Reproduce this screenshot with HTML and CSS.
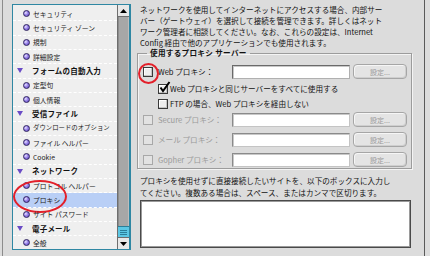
FILE: index.html
```html
<!DOCTYPE html>
<html lang="ja">
<head>
<meta charset="utf-8">
<link rel="stylesheet" href="styles.css">
</head>
<body>
<div class="sidebar">
  <div class="tree">
    <div class="rows">
      <div class="row item"><span class="bullet"></span><span class="txt">セキュリティ</span></div>
      <div class="row item"><span class="bullet"></span><span class="txt">セキュリティ ゾーン</span></div>
      <div class="row item"><span class="bullet"></span><span class="txt">規制</span></div>
      <div class="row item"><span class="bullet"></span><span class="txt">詳細設定</span></div>
      <div class="row cat"><span class="tri"></span><span class="txt">フォームの自動入力</span></div>
      <div class="row item"><span class="bullet"></span><span class="txt">定型句</span></div>
      <div class="row item"><span class="bullet"></span><span class="txt">個人情報</span></div>
      <div class="row cat"><span class="tri"></span><span class="txt">受信ファイル</span></div>
      <div class="row item"><span class="bullet"></span><span class="txt narrow">ダウンロードのオプション</span></div>
      <div class="row item"><span class="bullet"></span><span class="txt">ファイル ヘルパー</span></div>
      <div class="row item"><span class="bullet"></span><span class="txt">Cookie</span></div>
      <div class="row cat"><span class="tri"></span><span class="txt">ネットワーク</span></div>
      <div class="row item"><span class="bullet"></span><span class="txt">プロトコル ヘルパー</span></div>
      <div class="row item sel"><span class="bullet"></span><span class="txt">プロキシ</span><span class="mark-ellipse"></span></div>
      <div class="row item"><span class="bullet"></span><span class="txt">サイト パスワード</span></div>
      <div class="row cat"><span class="tri"></span><span class="txt">電子メール</span></div>
      <div class="row item"><span class="bullet"></span><span class="txt">全般</span></div>
    </div>
    <div class="scrollbar">
      <div class="sb-btn"><svg width="7" height="4" viewBox="0 0 7 4"><path d="M0 4 L3.5 0 L7 4 Z" fill="#000"/></svg></div>
      <div class="sb-track"></div>
      <div class="sb-thumb"><i></i><i></i><i></i></div>
      <div class="sb-btn"><svg width="7" height="4" viewBox="0 0 7 4"><path d="M0 0 L3.5 4 L7 0 Z" fill="#000"/></svg></div>
    </div>
  </div>
</div>
<div class="main">
  <p class="desc">ネットワークを使用してインターネットにアクセスする場合、内部サー<br>バー（ゲートウェイ）を選択して接続を管理できます。詳しくはネット<br>ワーク管理者に相談してください。なお、これらの設定は、Internet<br>Config 経由で他のアプリケーションでも使用されます。</p>
  <fieldset class="group">
    <legend>使用するプロキシ サーバー</legend>
    <div class="prow">
      <span class="cb circled"><span class="mark-circle"></span></span>
      <span class="plabel">Web プロキシ：</span>
      <span class="field"></span>
      <span class="btn">設定...</span>
    </div>
    <div class="srow first">
      <span class="cb checked"><svg width="13" height="13" viewBox="0 0 13 13"><path d="M2.5 6.5 L5 10 L11.5 1" fill="none" stroke="#000" stroke-width="2"/></svg></span>
      <span class="slabel">Web プロキシと同じサーバーをすべてに使用する</span>
    </div>
    <div class="srow second">
      <span class="cb"></span>
      <span class="slabel">FTP の場合、Web プロキシを経由しない</span>
    </div>
    <div class="prow dis r-secure">
      <span class="cb"></span>
      <span class="plabel">Secure プロキシ：</span>
      <span class="field"></span>
      <span class="btn">設定...</span>
    </div>
    <div class="prow dis r-next">
      <span class="cb"></span>
      <span class="plabel">メール プロキシ：</span>
      <span class="field"></span>
      <span class="btn">設定...</span>
    </div>
    <div class="prow dis r-next">
      <span class="cb"></span>
      <span class="plabel">Gopher プロキシ：</span>
      <span class="field"></span>
      <span class="btn">設定...</span>
    </div>
  </fieldset>
  <p class="desc2">プロキシを使用せずに直接接続したいサイトを、以下のボックスに入力し<br>てください。複数ある場合は、スペース、またはカンマで区切ります。</p>
  <div class="textbox"></div>
</div>
</body>
</html>
```
FILE: styles.css
```css
html, body {
  margin: 0;
  padding: 0;
}
body {
  width: 430px;
  height: 256px;
  overflow: hidden;
  background: #dcdcdc;
  font-family: "Noto Sans CJK JP", "Noto Sans", sans-serif;
  color: #000;
  display: flex;
}

/* ---------- left tree ---------- */
.sidebar {
  margin-left: 2px;
  border-left: 1px solid #8c8c8c;
  padding: 4px 0 0 9px;
  width: 119px;
  height: 256px;
  box-sizing: content-box;
}
.tree {
  width: 119px;
  height: 246px;
  box-sizing: border-box;
  border: 1px solid #2f87a3;
  border-right-width: 2px;
  display: flex;
  background: #efefef;
}
.rows {
  width: 104px;
  padding-top: 2px;
  overflow: hidden;
  box-sizing: border-box;
}
.row {
  height: 14.33px;
  box-sizing: border-box;
  border-bottom: 1px dashed #ffffff;
  display: flex;
  align-items: center;
  white-space: nowrap;
  position: relative;
}
.row .txt {
  font-size: 6.8px;
  line-height: 10px;
  color: #222;
}
.row .txt.narrow {
  font-size: 6.4px;
}
.item .bullet {
  width: 7px;
  height: 7px;
  margin-left: 10px;
  border-radius: 50%;
  box-sizing: border-box;
  border: 1px solid #2e2260;
  background: radial-gradient(circle at 35% 35%, #eee8ff 0, #a592ee 35%, #5b3fc0 100%);
  flex: none;
}
.item .txt {
  margin-left: 3px;
}
.cat .tri {
  width: 0;
  height: 0;
  margin-left: 4px;
  border-left: 3px solid transparent;
  border-right: 3px solid transparent;
  border-top: 5px solid #6a4cc6;
  flex: none;
}
.cat .txt {
  margin-left: 9px;
  font-weight: bold;
  font-size: 7.5px;
  letter-spacing: 0.2px;
  color: #111;
}
.row.sel {
  background: #b9cff6;
}
.mark-ellipse {
  position: absolute;
  left: 0;
  top: -13px;
  width: 54px;
  height: 33px;
  box-sizing: border-box;
  border: 2px solid #e3202a;
  border-radius: 50%;
}

.scrollbar {
  width: 12px;
  display: flex;
  flex-direction: column;
  box-sizing: border-box;
  border-left: 1px solid #6e6e6e;
}
.sb-btn {
  height: 12px;
  flex: none;
  background: #e8e8e8;
  display: flex;
  align-items: center;
  justify-content: center;
  box-sizing: border-box;
}
.sb-btn:first-child {
  border-bottom: 1px solid #6e6e6e;
}
.sb-btn:last-child {
  border-top: 1px solid #6e6e6e;
}
.sb-track {
  flex: 1;
  background: #a7a7a7;
  box-shadow: inset 1px 0 0 #8c8c8c, inset -1px 0 0 #bdbdbd;
}
.sb-thumb {
  height: 11px;
  flex: none;
  box-sizing: border-box;
  background: #5cc7e4;
  border-top: 1px solid #2b7f99;
  display: flex;
  flex-direction: column;
  align-items: center;
  justify-content: center;
  gap: 1px;
}
.sb-thumb i {
  display: block;
  width: 7px;
  height: 1px;
  background: #2a7f9a;
}

/* ---------- right panel ---------- */
.main {
  width: 294px;
  height: 256px;
  box-sizing: border-box;
  border-right: 1px solid #5a5a5a;
  padding: 4px 0 0 6px;
  display: flex;
  flex-direction: column;
}
.desc, .desc2 {
  margin: 0 0 0 3px;
  font-size: 7.6px;
  line-height: 11px;
  white-space: nowrap;
  color: #111;
}
.group {
  margin: 1px 0 0 0;
  width: 275px;
  box-sizing: border-box;
  border: 1px solid #9c9c9c;
  box-shadow: inset 1px 1px 0 #f4f4f4, 1px 1px 0 #f4f4f4;
  padding: 7px 0 1px 5px;
  min-inline-size: 0;
}
.group legend {
  margin-left: 4px;
  padding: 0 3px;
  font-size: 7.6px;
  line-height: 8px;
  font-weight: bold;
  letter-spacing: 0.3px;
  color: #111;
}
.prow {
  height: 15px;
  display: flex;
  align-items: center;
}
.prow.r-secure {
  margin-top: 2px;
}
.prow.r-next {
  margin-top: 5px;
}
.srow {
  height: 12px;
  display: flex;
  align-items: center;
  padding-left: 15px;
}
.srow.first {
  margin-top: 4px;
}
.srow.second {
  margin-top: 3px;
}
.cb {
  width: 10px;
  height: 10px;
  flex: none;
  box-sizing: border-box;
  border: 1px solid #3a3a3a;
  background: #eeeeee;
  box-shadow: inset -1px -1px 0 #c4c4c4, inset 1px 1px 0 #ffffff;
  position: relative;
}
.cb svg {
  position: absolute;
  left: -1px;
  top: -4px;
}
.mark-circle {
  position: absolute;
  left: -6px;
  top: -5px;
  width: 21px;
  height: 21px;
  box-sizing: border-box;
  border: 2px solid #e3202a;
  border-radius: 50%;
}
.dis .cb {
  border-color: #a8a8a8;
  background: #e2e2e2;
  box-shadow: none;
}
.plabel {
  width: 74px;
  margin-left: 5px;
  font-size: 7.6px;
  line-height: 10px;
  white-space: nowrap;
  color: #111;
}
.slabel {
  margin-left: 2px;
  font-size: 7.6px;
  line-height: 10px;
  white-space: nowrap;
  color: #111;
}
.dis .plabel {
  color: #9a9a9a;
}
.field {
  width: 118px;
  height: 14px;
  flex: none;
  box-sizing: border-box;
  background: #ffffff;
  border: 1px solid #6a6a6a;
  border-right-color: #b0b0b0;
  border-bottom-color: #b0b0b0;
  box-shadow: inset 1px 1px 0 #c8c8c8;
}
.dis .field {
  border-color: #8a8a8a;
  border-right-color: #c4c4c4;
  border-bottom-color: #c4c4c4;
}
.btn {
  width: 54px;
  height: 15px;
  margin-left: 3px;
  flex: none;
  box-sizing: border-box;
  border: 1px solid #a6a6a6;
  border-radius: 4px;
  background: #e4e4e4;
  box-shadow: inset 1px 1px 0 #f6f6f6, inset -1px -1px 0 #cfcfcf;
  display: flex;
  align-items: center;
  justify-content: center;
  font-size: 7px;
  line-height: 10px;
  color: #9a9a9a;
}
.desc2 {
  margin-top: 6px;
  line-height: 11.5px;
}
.textbox {
  margin: 2px 0 0 3px;
  width: 271px;
  height: 48px;
  box-sizing: border-box;
  background: #ffffff;
  border: 1px solid #4a4a4a;
  box-shadow: inset 1px 1px 0 #9a9a9a, inset -1px -1px 0 #9a9a9a;
}
```
